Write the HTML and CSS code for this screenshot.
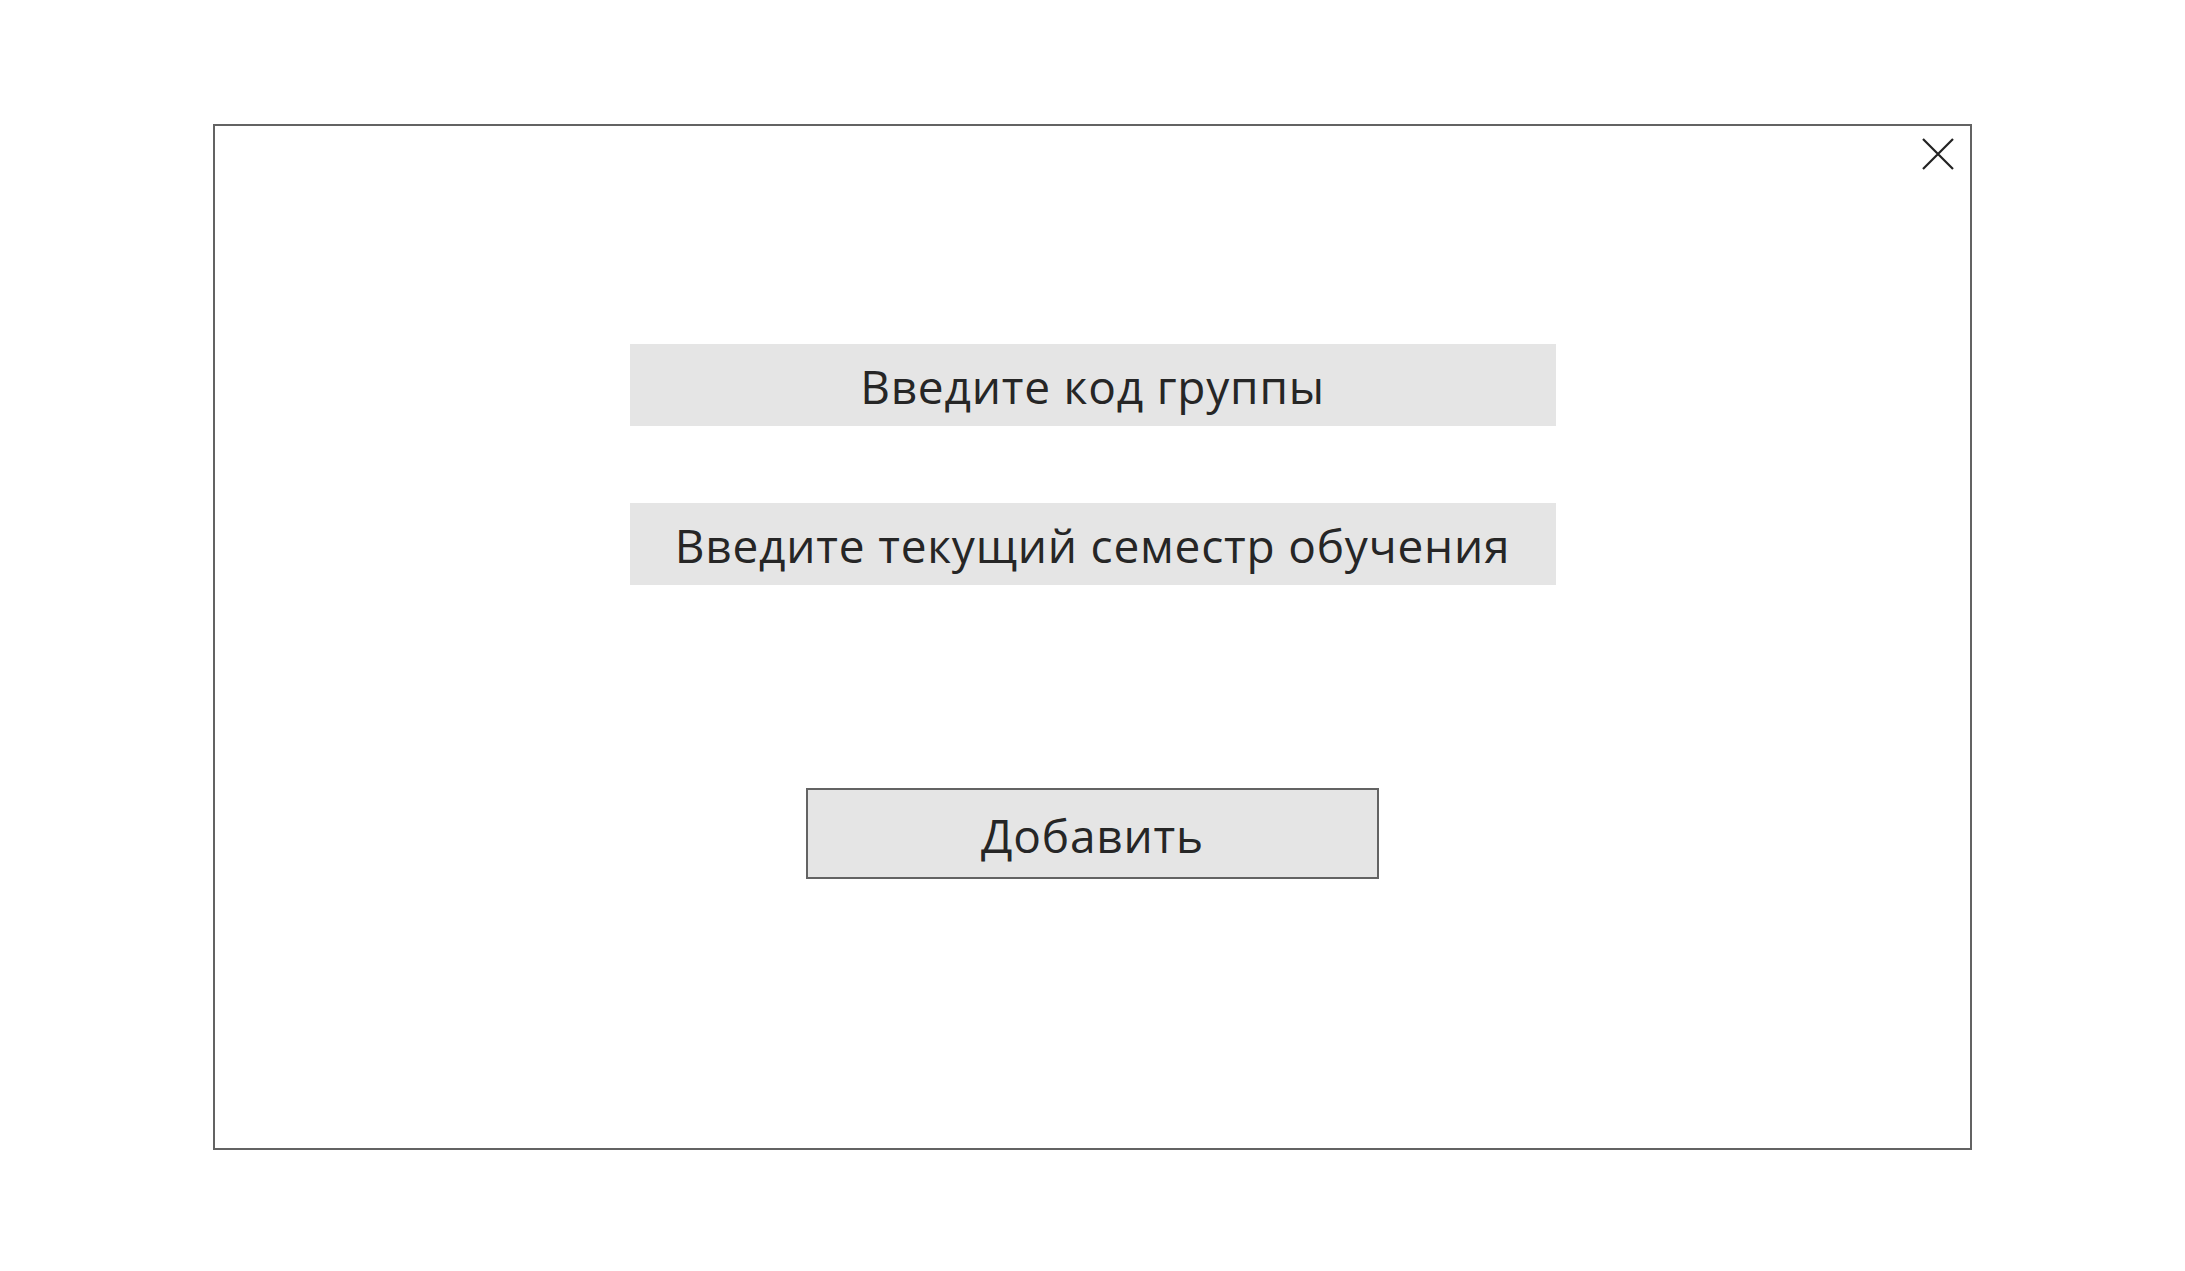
FILE: index.html
```html
<!DOCTYPE html>
<html lang="ru">
<head>
<meta charset="utf-8">
<title>Добавить группу</title>
<link rel="stylesheet" href="styles.css">
</head>
<body>
<div class="page">
  <div class="dialog">
    <button class="close" aria-label="Закрыть">
      <svg width="32" height="32" viewBox="0 0 32 32"><path d="M1 1 L31 31 M31 1 L1 31" stroke="#222" stroke-width="2.2" fill="none"/></svg>
    </button>
    <div class="field">Введите код группы</div>
    <div class="field field-second">Введите текущий семестр обучения</div>
    <div class="submit">Добавить</div>
  </div>
</div>
</body>
</html>
```
FILE: styles.css
```css
html, body {
  margin: 0;
  padding: 0;
  background: #ffffff;
}
.page {
  padding: 124px 0 0 213px;
  font-family: "Open Sans", "Noto Sans", sans-serif;
  color: #262626;
}
.dialog {
  position: relative;
  box-sizing: border-box;
  width: 1759px;
  height: 1026px;
  border: 2px solid #636363;
  background: #ffffff;
  display: flex;
  flex-direction: column;
  align-items: center;
  padding-top: 218px;
}
.close {
  position: absolute;
  top: 12px;
  right: 16px;
  width: 32px;
  height: 32px;
  padding: 0;
  border: 0;
  background: transparent;
  display: block;
}
.close svg { display: block; }
.field {
  box-sizing: border-box;
  width: 926px;
  height: 82px;
  background: #e5e5e5;
  display: flex;
  align-items: center;
  justify-content: center;
  font-size: 46px;
  letter-spacing: 0.8px;
  line-height: 1;
  padding-top: 2px;
}
.field-second {
  margin-top: 77px;
}
.submit {
  box-sizing: border-box;
  margin-top: 203px;
  width: 573px;
  height: 91px;
  border: 2px solid #636363;
  background: #e5e5e5;
  display: flex;
  align-items: center;
  justify-content: center;
  font-size: 46px;
  letter-spacing: 0.8px;
  line-height: 1;
  padding-top: 2px;
}
```
